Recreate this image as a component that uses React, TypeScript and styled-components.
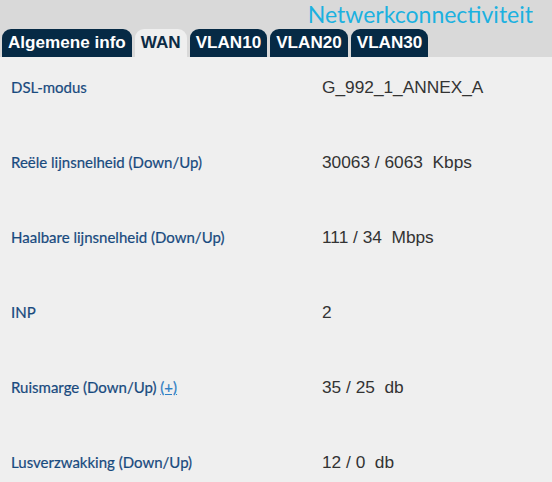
import React from 'react'
import styled, { createGlobalStyle } from 'styled-components'

const GlobalStyle = createGlobalStyle`
    html, body {
        margin: 0;
        padding: 0;
        background: #efefef;
    }
`

const Page = styled.div`
    width: 552px;
    height: 482px;
    overflow: hidden;
    background: #efefef;
`

const Header = styled.div`
    height: 57px;
    background: #d9d9d9;
    display: flex;
    flex-direction: column;
    justify-content: space-between;
`

const Title = styled.div`
    align-self: flex-end;
    padding: 1px 19px 0 0;
    font-family: Lato, "Noto Sans", sans-serif;
    font-size: 23px;
    color: #1cb1e0;
    line-height: 27px;
`

const Tabs = styled.div`
    display: flex;
    gap: 3px;
    padding-left: 2px;
`

const Tab = styled.div<{ $active?: boolean }>`
    height: 28px;
    padding: 0 6px;
    display: flex;
    align-items: center;
    border-radius: 9px 9px 0 0;
    font-family: "Liberation Sans", Arial, sans-serif;
    font-weight: bold;
    font-size: 17.1px;
    background: ${p => (p.$active ? '#efefef' : '#062a45')};
    color: ${p => (p.$active ? '#0b2a44' : '#ffffff')};
`

const Content = styled.div`
    padding-top: 20px;
`

const Row = styled.div`
    height: 75px;
    display: flex;
    align-items: flex-start;
`

const Label = styled.div`
    width: 311px;
    padding-left: 11px;
    font-family: Lato, "Noto Sans", sans-serif;
    font-size: 15px;
    line-height: 20px;
    color: #184a7e;
    -webkit-text-stroke: 0.2px #184a7e;
`

const More = styled.a`
    color: #2f7fc4;
    -webkit-text-stroke: 0.2px #2f7fc4;
    text-decoration: underline;
    cursor: pointer;
`

const Value = styled.div`
    font-family: "Liberation Sans", Arial, sans-serif;
    font-size: 17.3px;
    line-height: 20px;
    color: #333333;
    white-space: pre;
`

const rows = [
    { label: 'DSL-modus', value: 'G_992_1_ANNEX_A' },
    { label: 'Reële lijnsnelheid (Down/Up)', value: '30063 / 6063  Kbps' },
    { label: 'Haalbare lijnsnelheid (Down/Up)', value: '111 / 34  Mbps' },
    { label: 'INP', value: '2' },
    { label: 'Ruismarge (Down/Up)', value: '35 / 25  db', more: true },
    { label: 'Lusverzwakking (Down/Up)', value: '12 / 0  db' },
]

const tabs = ['Algemene info', 'WAN', 'VLAN10', 'VLAN20', 'VLAN30']

export default function App() {
    return (
        <>
            <GlobalStyle />
            <Page>
                <Header>
                    <Title>Netwerkconnectiviteit</Title>
                    <Tabs>
                        {tabs.map(t => (
                            <Tab key={t} $active={t === 'WAN'}>{t}</Tab>
                        ))}
                    </Tabs>
                </Header>
                <Content>
                    {rows.map(r => (
                        <Row key={r.label}>
                            <Label>
                                {r.label}
                                {r.more && <> <More>(+)</More></>}
                            </Label>
                            <Value>{r.value}</Value>
                        </Row>
                    ))}
                </Content>
            </Page>
        </>
    )
}
